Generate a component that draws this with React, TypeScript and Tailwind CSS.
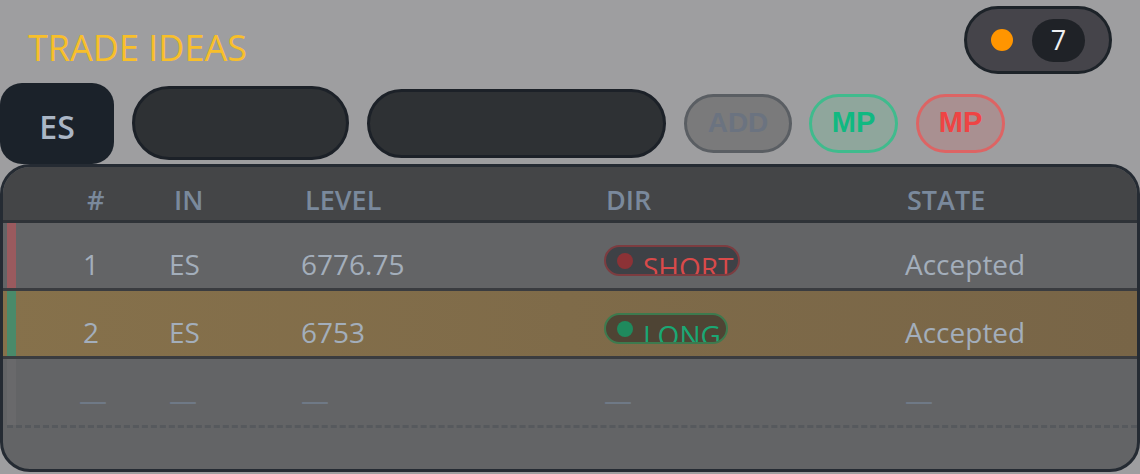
import React from 'react';

type Dir = 'SHORT' | 'LONG';

interface Idea {
  n: number;
  inst: string;
  level: string;
  dir: Dir;
  state: string;
}

const ideas: Idea[] = [
  { n: 1, inst: 'ES', level: '6776.75', dir: 'SHORT', state: 'Accepted' },
  { n: 2, inst: 'ES', level: '6753', dir: 'LONG', state: 'Accepted' },
];

const rowCols = 'grid grid-cols-[86px_132px_303px_301px_1fr]';
const headCols = 'grid grid-cols-[87px_131px_301px_301px_1fr]';

function DirBadge({ dir }: { dir: Dir }) {
  const short = dir === 'SHORT';
  return (
    <div
      className={
        'flex h-[31px] w-fit items-start overflow-hidden rounded-full border-2 pl-[11px] pr-[5px] ' +
        (short ? 'border-[#7c3c40] bg-[#3e4146]' : 'border-[#3d7a4e] bg-[#4e4434]')
      }
    >
      <span
        className={
          'mt-[6px] h-[16px] w-[16px] shrink-0 rounded-full ' +
          (short ? 'bg-[#8c3236]' : 'bg-[#1f8a5d]')
        }
      />
      <span
        className={
          'ml-[10px] mt-[-1px] text-[28px] leading-normal ' +
          (short ? 'text-[#d94a4a]' : 'text-[#1aa874]')
        }
      >
        {dir}
      </span>
    </div>
  );
}

export default function App() {
  return (
    <div className="h-[474px] w-[1140px] overflow-hidden bg-[#9e9ea0] font-['Open_Sans','Noto_Sans',sans-serif]">
      {/* title bar */}
      <div className="flex h-[82px] items-start justify-between pl-[28px] pr-[28px]">
        <h1 className="mt-[21px] text-[36px] font-normal leading-normal text-[#f8bf2a]">TRADE IDEAS</h1>
        <div className="mt-[6px] flex h-[68px] w-[148px] items-center rounded-full border-[3px] border-[#1d2329] bg-[#45444a] pl-[24px]">
          <span className="h-[22px] w-[22px] rounded-full bg-[#ff9500]" />
          <span className="ml-[19px] flex h-[43px] w-[53px] items-center justify-center rounded-full bg-[#1f2227] text-[27px] text-[#eef0f3]">
            7
          </span>
        </div>
      </div>

      {/* controls */}
      <div className="flex h-[82px] items-center gap-[18px]">
        <div className="flex h-[81px] w-[114px] items-center justify-center rounded-[22px] bg-[#1b222a] pt-[8px] text-[32px] font-semibold text-[#aab6c5]">
          ES
        </div>
        <div className="h-[74px] w-[217px] rounded-full border-[3px] border-[#1c2128] bg-[#2e3134]" />
        <div className="h-[69px] w-[299px] rounded-full border-[3px] border-[#1c2128] bg-[#2e3134]" />
        <button className="h-[59px] w-[108px] rounded-full border-[3px] border-[#5a5e63] bg-[#7a7a7b] font-['Liberation_Sans',Arial,sans-serif] text-[28px] font-bold text-[#6b7380]">
          ADD
        </button>
        <div className="flex gap-[18px]">
          <button className="-ml-[1px] h-[59px] w-[89px] rounded-full border-[3px] border-[#40bb8d] bg-[#8fa69c] font-['Liberation_Sans',Arial,sans-serif] text-[29px] font-bold text-[#10b981]">
            MP
          </button>
          <button className="h-[59px] w-[89px] rounded-full border-[3px] border-[#dd6464] bg-[#a99091] font-['Liberation_Sans',Arial,sans-serif] text-[29px] font-bold text-[#ef4444]">
            MP
          </button>
        </div>
      </div>

      {/* table */}
      <div className="h-[308px] w-[1140px] overflow-hidden rounded-[30px] border-[3px] border-[#252b33] bg-[#636466]">
        <div className={headCols + ' h-[53px] bg-[#444547] pl-[84px] pt-[13px] text-[27px] font-semibold leading-normal text-[#7a899c]'}>
          <div>#</div>
          <div>IN</div>
          <div>LEVEL</div>
          <div>DIR</div>
          <div>STATE</div>
        </div>
        <div className="h-[3px] bg-[#2f3338]" />

        {ideas.map((idea) => (
          <div key={idea.n}>
            <div
              className={
                'flex h-[65px] ' +
                (idea.dir === 'LONG' ? 'bg-gradient-to-r from-[#86714b] to-[#786547]' : 'bg-[#636466]')
              }
            >
              <div className="ml-[4px] w-[9px] shrink-0 ">
                <div className={'h-full w-full ' + (idea.dir === 'SHORT' ? 'bg-[#9a5a5e]' : 'bg-[#4a8a6a]')} />
              </div>
              <div className={rowCols + ' flex-1 pl-[67px] text-[28px] leading-normal text-[#a3aebb]'}>
                <div className="pt-[20px]">{idea.n}</div>
                <div className="pt-[20px]">{idea.inst}</div>
                <div className="pt-[20px]">{idea.level}</div>
                <div className="pt-[22px]">
                  <DirBadge dir={idea.dir} />
                </div>
                <div className="pt-[20px]">{idea.state}</div>
              </div>
            </div>
            <div className="h-[3px] bg-[#3a3c40]" />
          </div>
        ))}

        {/* empty entry row */}
        <div className="flex h-[66px]">
          <div className="ml-[4px] w-[9px] shrink-0 bg-[#69696b]" />
          <div className={rowCols + ' flex-1 pl-[67px] pt-[19px] text-[28px] leading-normal text-[#6f7986]'}>
            <div className="-ml-[4px]">—</div>
            <div>—</div>
            <div>—</div>
            <div>—</div>
            <div>—</div>
          </div>
        </div>
        <div className="ml-[4px] border-t-[3px] border-dashed border-[#56595d]" />
      </div>
    </div>
  );
}
